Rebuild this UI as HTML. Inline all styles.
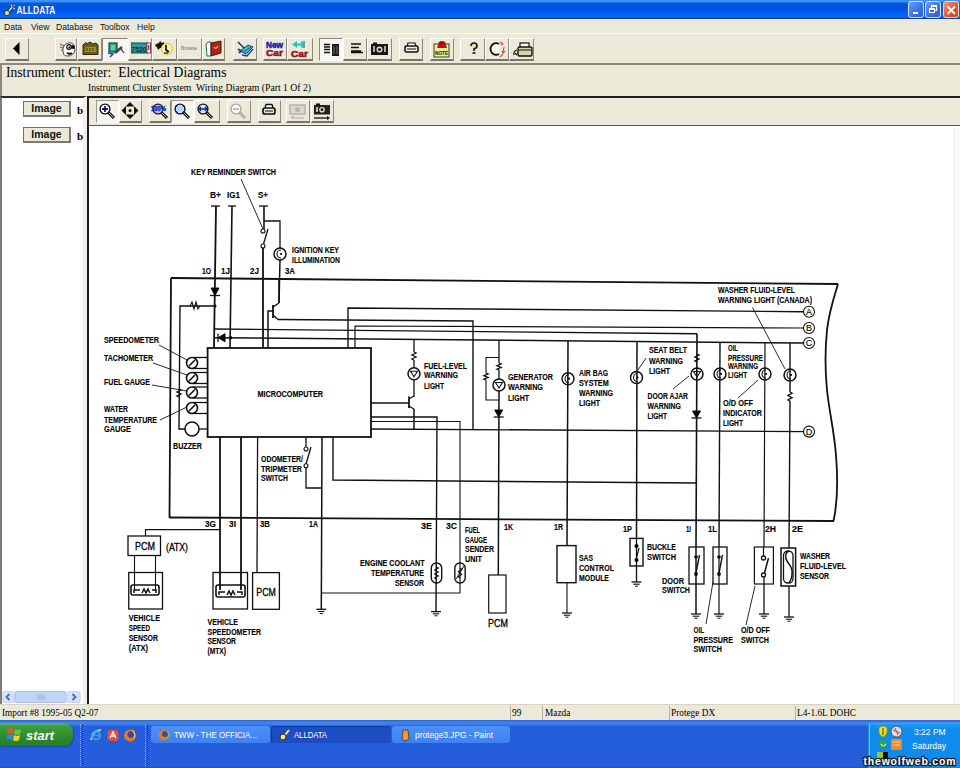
<!DOCTYPE html>
<html><head><meta charset="utf-8">
<style>
*{margin:0;padding:0;box-sizing:border-box}
html,body{width:960px;height:768px;overflow:hidden;background:#ECE9D8;font-family:"Liberation Sans",sans-serif}
.a{position:absolute}
#title{left:0;top:0;width:960px;height:19px;background:linear-gradient(#3a96ff 0px,#3890fa 1.5px,#0a5ed8 3px,#0052d9 5px,#0054e6 9px,#005df2 13px,#0868fb 16px,#0762f2 17.3px,#0c45b0 18px,#0d3a98 19px)}
.wb{top:1px;width:16px;height:17px;border:1px solid #d8e6fc;border-radius:3px;background:linear-gradient(135deg,#6d9bf7,#3b6fe6 60%,#2a5fdc)}
#menu{left:0;top:19px;width:960px;height:14px;border-top:1px solid #dff3fb;background:linear-gradient(#e3e6dc 0px,#ECE9D8 2px);font-size:8.6px;color:#111}
#menu span{position:absolute;top:3px;line-height:9px}
#tb{left:0;top:33px;width:960px;height:31px;border-top:1px solid #fbfaf4}
.btn{position:absolute;top:4px;height:24px;border-left:1px solid #fff;border-top:1px solid #fff;border-right:1px solid #8f8b7b;border-bottom:2px solid #77746a}
.btn svg{position:absolute;left:2px;top:1px}
.prs{background:#f7f6f0;border-left:1px solid #8a877a;border-top:1px solid #8a877a;border-right:1px solid #fff;border-bottom:1px solid #fff}
.ib.prs{border-left:1px solid #9d9a8c;border-top:1px solid #9d9a8c;border-right:1px solid #fff;border-bottom:1px solid #fff;background:#f4f3ee}
#hdr{left:0;top:63px;width:960px;height:33px;border-top:2px solid #8c897c;border-left:2px solid #8c897c}
#hdr .h1{left:4px;top:0px;font-family:"Liberation Serif",serif;font-size:13.6px;color:#000;white-space:nowrap}
#hdr .h2{left:86px;top:17px;font-family:"Liberation Serif",serif;font-size:9.7px;color:#000;white-space:nowrap}
#left{left:0;top:96px;width:87px;height:608px;background:#fff;border-top:2px solid #2b2b2b;border-left:2px solid #7b7b7b;border-right:4px solid #f0efea}
#right{left:87px;top:96px;width:873px;height:608px;background:#fff;border-top:2px solid #1e1e1e;border-left:2px solid #1e1e1e}
#itb{left:0;top:0;width:872px;height:28px;background:#ECE9D8;border-bottom:1px solid #5a5a55}
.ib{position:absolute;top:3px;height:23px;border-left:1px solid #fff;border-top:1px solid #fff;border-right:1px solid #8f8b7b;border-bottom:2px solid #77746a}
.ib svg{position:absolute;left:1px;top:0px}
.imgbtn{position:absolute;left:21px;width:48px;height:16px;background:#ECE9D8;border:1px solid #6f6f6f;border-right:2px solid #7a7a7a;border-bottom:2px solid #7a7a7a;font-weight:bold;font-size:10.5px;text-align:center;line-height:13px;color:#111}
.bb{position:absolute;left:75px;font-family:"Liberation Serif",serif;font-weight:bold;font-size:11px}
#status{left:0;top:704px;width:960px;height:16px;background:#ECE9D8;border-top:1px solid #d8d4c4;font-family:"Liberation Serif",serif;font-size:9.3px;color:#000}
#status span{position:absolute;top:3px;line-height:10px}
#status i{position:absolute;top:1px;width:1px;height:14px;background:#b5b2a4}
#task{left:0;top:720px;width:960px;height:48px;background:linear-gradient(#2b62cc 0px,#3a78e2 1.5px,#3e84f3 3px,#3a7ceb 4.5px,#2763dd 6px,#245edb 8px,#245edb 46px,#1f52c4 48px)}
#start{left:0;top:3px;width:73px;height:23px;border-radius:0 9px 9px 0;background:linear-gradient(#5cb85c 0%,#3b9b3b 18%,#2f8b2f 60%,#287c28 100%);box-shadow:1px 1px 1px #1a4aa0}
.tbtn{position:absolute;top:6px;height:17px;border-radius:3px;overflow:hidden}
#tray{left:868px;top:3px;width:92px;height:45px;background:linear-gradient(#1e9af5,#0f8ced 10%,#0e8aec 100%);border-left:1px solid #2a8ae8;border-top:1px solid #3aa8f8;box-shadow:inset 1px 0 0 #5ec0ff}
</style></head><body>
<div id="title" class="a">
<svg class="a" style="left:2px;top:3px" width="14" height="14" viewBox="0 0 14 14"><path d="M4,12 L10,4" stroke="#222" stroke-width="3"/><path d="M4,12 L10,4" stroke="#e8f4d0" stroke-width="1.5"/><circle cx="5" cy="10" r="2.6" fill="#c8e8a0" stroke="#2b2b10" stroke-width="0.9"/><path d="M9,1.5 L10,3.5 M11.5,3 L13,2 M11,5 L13,6" stroke="#fff" stroke-width="0.9"/></svg>
<svg class="a" style="left:16px;top:4px" width="42" height="12"><text x="1" y="10" font-family="Liberation Sans" font-weight="bold" font-size="10.2" fill="#0a1850" fill-opacity="0.85" textLength="39" lengthAdjust="spacingAndGlyphs">ALLDATA</text><text x="0.5" y="9.5" font-family="Liberation Sans" font-weight="bold" font-size="10.2" fill="#fff" textLength="39" lengthAdjust="spacingAndGlyphs">ALLDATA</text></svg>
<div class="wb a" style="left:908px"><div class="a" style="left:4px;top:10px;width:5px;height:2px;background:#fff"></div></div>
<div class="wb a" style="left:925px"><div class="a" style="left:5px;top:3px;width:6px;height:6px;border:1px solid #fff;border-top-width:2px"></div><div class="a" style="left:3px;top:6px;width:6px;height:5px;border:1px solid #fff;border-top-width:2px;background:#3e72e5"></div></div>
<div class="wb a" style="left:943px;background:linear-gradient(135deg,#f09a7a,#e2582f 55%,#c9401a)"><svg class="a" style="left:1px;top:2px" width="12" height="12"><path d="M2.5,2.5 L10,10 M10,2.5 L2.5,10" stroke="#fff" stroke-width="1.8"/></svg></div>
</div>
<div id="menu" class="a"><span style="left:4px">Data</span><span style="left:31px">View</span><span style="left:56px">Database</span><span style="left:100px">Toolbox</span><span style="left:137px">Help</span></div>
<div id="tb" class="a">
<div class="btn" style="left:5px;top:4px;width:24px;height:23px"><svg width="21" height="20" viewBox="0 0 21 20"><path d="M5,8.4 L11.5,2 L11.5,15 Z" fill="#000"/></svg></div>
<div class="btn" style="left:55px;top:4px;width:22px;height:23px"><svg width="19" height="20" viewBox="0 0 19 20"><path d="M2,4 L6,6 M2,7 L5,8 M3,10 L5,10" stroke="#a05050" stroke-width="1.2"/><path d="M5,12 Q4,5 10,3 Q15,2 16,6 Q18,10 16,13 Q13,17 8,16 Q5,15 5,12 Z" fill="#fff" stroke="#333" stroke-width="0.9"/><circle cx="11" cy="7" r="2.3" fill="#fff" stroke="#111" stroke-width="1.2"/><circle cx="15" cy="7" r="2" fill="#111"/><circle cx="11.3" cy="7.3" r="1" fill="#111"/><path d="M9,12.5 Q11,15 14,13" stroke="#111" stroke-width="2" fill="none"/></svg></div>
<div class="btn" style="left:77px;top:4px;width:25px;height:23px"><svg width="22" height="20" viewBox="0 0 22 20"><path d="M3,5 L6,2.5 L7,4 L10,2 L13,4 L16,3 L18,5 L18,14.5 L3,14.5 Z" fill="#6a5c14" stroke="#2e2806" stroke-width="1"/><rect x="5" y="7" width="11" height="5" fill="#9c8e2a"/><path d="M7,8 V11 M10,8 V11 M13,8 V11" stroke="#3e360a" stroke-width="1"/></svg></div>
<div class="btn prs" style="left:102px;top:4px;width:26px;height:23px"><svg width="23" height="20" viewBox="0 0 23 20"><rect x="4" y="3" width="8" height="9" fill="#2aa878" stroke="#0e4a3a" stroke-width="1.2"/><rect x="6" y="5" width="4" height="5" fill="#5ad0b0"/><path d="M3,13 L8,14 L5,17" stroke="#2050b8" stroke-width="1.6" fill="none"/><path d="M10,13 L17,7" stroke="#444" stroke-width="2.4"/><path d="M16,9 L19,13" stroke="#333" stroke-width="1.2"/></svg></div>
<div class="btn" style="left:128px;top:4px;width:24px;height:23px"><svg width="21" height="20" viewBox="0 0 21 20"><rect x="0" y="3" width="16" height="10" fill="#2a9a9a" stroke="#1a4050" stroke-width="1"/><text x="0.5" y="11.5" font-size="8" font-weight="bold" fill="#0d2a3a" font-family="Liberation Sans" textLength="15" lengthAdjust="spacingAndGlyphs">7520</text><rect x="16" y="3" width="3.5" height="10" fill="#fff" stroke="#a03040" stroke-width="1"/><rect x="17.3" y="5" width="1" height="5" fill="#111"/></svg></div>
<div class="btn" style="left:152px;top:4px;width:25px;height:23px"><svg width="22" height="20" viewBox="0 0 22 20"><path d="M1,4 L4,3 L5,1 L7,3 L9,2 L9,5 L7,6 L8,8 L5,8 L3,10 L2,7 L0,6 Z" fill="#111"/><circle cx="12" cy="9" r="5.5" fill="#f8f4c0" stroke="#d8d040" stroke-width="1.3"/><path d="M11,5 L11,10 L14,12" stroke="#000" stroke-width="1.6" fill="none"/><path d="M9,13 H13" stroke="#111" stroke-width="1.2"/></svg></div>
<div class="btn" style="left:177px;top:4px;width:24.5px;height:23px"><svg width="21.5" height="20" viewBox="0 0 21.5 20"><text x="1" y="10" font-size="5.5" font-weight="bold" fill="#8a8a80" font-family="Liberation Sans" textLength="16" lengthAdjust="spacingAndGlyphs">Browse</text></svg></div>
<div class="btn" style="left:202px;top:4px;width:23px;height:23px"><svg width="20" height="20" viewBox="0 0 20 20"><path d="M1,4 L3,2 L6,2 L6,16 L2,16 Z" fill="#fff" stroke="#2a6a40" stroke-width="1"/><path d="M6,3 L16,1 L16,13 L6,16 Z" fill="#a82810" stroke="#401008" stroke-width="0.9"/><path d="M9,7 Q11,10 13,6" stroke="#f8a0a0" stroke-width="1.3" fill="none"/></svg></div>
<div class="btn" style="left:232.7px;top:4px;width:24.30000000000001px;height:23px"><svg width="21.30000000000001" height="20" viewBox="0 0 21.30000000000001 20"><path d="M2,2 L8,8" stroke="#222" stroke-width="1.3"/><path d="M4,11 L10,14 L17,7 L12,5 Z" fill="#30c0b0" stroke="#1a3a9a" stroke-width="1"/><path d="M2,9 L5,11 L3,13" stroke="#1a3aa0" stroke-width="2" fill="none"/><path d="M8,12 L15,7" stroke="#1a3a9a" stroke-width="0.8"/><path d="M6,15 L11,16 L17,9" stroke="#1a3a9a" stroke-width="1.4" fill="none"/></svg></div>
<div class="btn" style="left:263px;top:4px;width:24px;height:23px"><svg width="21" height="20" viewBox="0 0 21 20"><text x="0" y="7.5" font-size="8.5" font-weight="bold" fill="#1820b0" stroke="#1820b0" stroke-width="0.5" font-family="Liberation Sans" textLength="17" lengthAdjust="spacingAndGlyphs">New</text><text x="0" y="16" font-size="9" font-weight="bold" fill="#901018" stroke="#901018" stroke-width="0.5" font-family="Liberation Sans" textLength="17" lengthAdjust="spacingAndGlyphs">Car</text></svg></div>
<div class="btn" style="left:287px;top:4px;width:26px;height:23px"><svg width="23" height="20" viewBox="0 0 23 20"><path d="M2,4.5 L7,1 L7,3.5 L11,3.5 L11,1.5 L13,1.5 L13,7.5 L11,7.5 L11,5.5 L7,5.5 L7,8 Z" fill="#20c8c0"/><path d="M14,1 V8" stroke="#1a6a6a" stroke-width="1.2"/><text x="1" y="16.5" font-size="9" font-weight="bold" fill="#901018" stroke="#901018" stroke-width="0.5" font-family="Liberation Sans" textLength="17" lengthAdjust="spacingAndGlyphs">Car</text></svg></div>
<div class="btn prs" style="left:319px;top:4px;width:24px;height:23px"><svg width="21" height="20" viewBox="0 0 21 20"><path d="M2,4.5 H8 M2,7 H8 M2,9.5 H8 M2,12.5 H8" stroke="#111" stroke-width="1.4"/><rect x="10" y="4" width="7" height="12" fill="#1a1a1a"/><path d="M12,6 V14 M15,6 V14" stroke="#888" stroke-width="0.8"/></svg></div>
<div class="btn" style="left:343px;top:4px;width:24px;height:23px"><svg width="21" height="20" viewBox="0 0 21 20"><path d="M5,4 H15 M5,7.5 H13 M5,11 H15 M5,12.5 H17" stroke="#111" stroke-width="1.4"/></svg></div>
<div class="btn" style="left:367px;top:4px;width:25px;height:23px"><svg width="22" height="20" viewBox="0 0 22 20"><rect x="1" y="4" width="17" height="11" fill="#161616"/><rect x="3" y="2.5" width="4" height="2" fill="#111"/><circle cx="9.5" cy="9.5" r="3" fill="#ddd"/><circle cx="9.5" cy="9.5" r="1.6" fill="#111"/><rect x="3" y="6" width="2" height="6" fill="#aaa"/><rect x="14" y="6" width="2" height="6" fill="#aaa"/></svg></div>
<div class="btn" style="left:399px;top:4px;width:24px;height:23px"><svg width="21" height="20" viewBox="0 0 21 20"><path d="M5,6 L6,3 L13,3 L14,6" fill="#fff" stroke="#111" stroke-width="1.2"/><rect x="3" y="6" width="13" height="6" rx="1.5" fill="#eee" stroke="#111" stroke-width="1.6"/><path d="M5,9 H14" stroke="#111" stroke-width="1"/></svg></div>
<div class="btn" style="left:430px;top:4px;width:24px;height:23px"><svg width="21" height="20" viewBox="0 0 21 20"><rect x="1" y="4" width="15" height="13" fill="#f0ec9a" stroke="#2a4a20" stroke-width="1"/><text x="2" y="15" font-size="5.5" font-weight="bold" fill="#111" font-family="Liberation Sans" textLength="13" lengthAdjust="spacingAndGlyphs">NOTE</text><path d="M5,5 Q5,1 9,1 Q13,1 13,5 L14,8 L4,8 Z" fill="#c01018"/><path d="M7,3 H11" stroke="#600" stroke-width="1"/></svg></div>
<div class="btn" style="left:460px;top:4px;width:25px;height:23px"><svg width="22" height="20" viewBox="0 0 22 20"><path d="M8,6 Q8,3 11,3 Q14,3 14,6 Q14,8 11,9 L11,11" stroke="#111" stroke-width="1.6" fill="#f0e880"/><path d="M9.5,13 H12.5" stroke="#111" stroke-width="1.6"/></svg></div>
<div class="btn" style="left:485px;top:4px;width:24px;height:23px"><svg width="21" height="20" viewBox="0 0 21 20"><path d="M11,4 Q7,2 4,5 Q1,9 4,13 Q7,16 11,14" stroke="#111" stroke-width="1.8" fill="#fafafa"/><path d="M12,2 L15,4 L13,5 M16,7 L15,12 M14,11 L15,13 L17,11 M15,14 L12,17" stroke="#d04848" stroke-width="1.1" fill="none"/></svg></div>
<div class="btn" style="left:509px;top:4px;width:25px;height:23px"><svg width="22" height="20" viewBox="0 0 22 20"><rect x="8" y="3" width="9" height="5" fill="#fff" stroke="#111" stroke-width="1.2"/><rect x="6" y="7" width="14" height="9" rx="1.5" fill="#d8d4b0" stroke="#111" stroke-width="1.4"/><path d="M7,10 H19" stroke="#111"/><path d="M2,15 Q1,11 5,10 M3,13 L5,15" stroke="#111" stroke-width="1.1" fill="none"/></svg></div>
</div>
<div id="hdr" class="a"><div class="h1 a">Instrument Cluster:&nbsp; Electrical Diagrams</div><div class="h2 a">Instrument Cluster System&nbsp; Wiring Diagram (Part 1 Of 2)</div></div>
<div id="left" class="a">
<div class="imgbtn" style="top:3px">Image</div><div class="bb" style="top:6px">b</div>
<div class="imgbtn" style="top:29px">Image</div><div class="bb" style="top:32px">b</div>
<div class="a" style="left:0px;top:593px;width:79px;height:12px;border-radius:2px;background:linear-gradient(#eef2fd,#dfe8fb)"></div>
<svg class="a" style="left:0px;top:593px" width="80" height="12"><rect x="1" y="0.5" width="11" height="11" rx="2" fill="#d6e1fb" stroke="#c3d3f6"/><path d="M7.5,3 L4.5,6 L7.5,9" stroke="#4868b8" stroke-width="1.8" fill="none"/><rect x="13" y="0.5" width="51" height="11" rx="2" fill="#c2d3f9" stroke="#aabff2"/><path d="M36,3.5 V8.5 M38,3.5 V8.5 M40,3.5 V8.5 M42,3.5 V8.5" stroke="#8aa4e0" stroke-width="0.8"/><rect x="66" y="0.5" width="12" height="11" rx="2" fill="#d6e1fb" stroke="#c3d3f6"/><path d="M70.5,3 L73.5,6 L70.5,9" stroke="#4868b8" stroke-width="1.8" fill="none"/></svg>
</div>
<div id="right" class="a"><div id="itb" class="a">
<div class="ib prs" style="left:6.5px;top:2px;width:23.0px;height:23px"><svg width="20.0" height="20" viewBox="0 0 20.0 20"><path d="M10.5,11.5 L16,17" stroke="#111" stroke-width="3"/><path d="M11,12 L15.5,16.5" stroke="#ddd" stroke-width="0.8"/><circle cx="7" cy="8" r="4.9" fill="#fff" stroke="#111" stroke-width="1.4"/><path d="M4,8 H10 M7,5 V11" stroke="#1a1a70" stroke-width="1.8"/></svg></div>
<div class="ib" style="left:29.5px;top:2px;width:23.0px;height:23px"><svg width="20.0" height="20" viewBox="0 0 20.0 20"><path d="M9,1 L13.5,5.5 L4.5,5.5 Z M9,18 L13.5,13.5 L4.5,13.5 Z M0.5,9.5 L5,5 L5,14 Z M17.5,9.5 L13,5 L13,14 Z" fill="#111"/><circle cx="9" cy="9.5" r="1.5" fill="#111"/></svg></div>
<div class="ib" style="left:60px;top:2px;width:22px;height:23px"><svg width="19" height="20" viewBox="0 0 19 20"><path d="M10.5,11.5 L16,17" stroke="#111" stroke-width="3"/><path d="M11,12 L15.5,16.5" stroke="#ddd" stroke-width="0.8"/><circle cx="7" cy="8" r="4.9" fill="#fff" stroke="#111" stroke-width="1.4"/><circle cx="7" cy="8" r="4" fill="#9fc8f0"/><text x="0" y="9.5" font-size="6.5" font-weight="bold" fill="#1030b0" stroke="#1030b0" stroke-width="0.4" font-family="Liberation Sans" textLength="15" lengthAdjust="spacingAndGlyphs">100%</text></svg></div>
<div class="ib prs" style="left:82px;top:2px;width:23px;height:23px"><svg width="20" height="20" viewBox="0 0 20 20"><path d="M10.5,11.5 L16,17" stroke="#111" stroke-width="3"/><path d="M11,12 L15.5,16.5" stroke="#ddd" stroke-width="0.8"/><circle cx="7" cy="8" r="4.9" fill="#fff" stroke="#111" stroke-width="1.4"/><circle cx="7" cy="8" r="3.8" fill="#a8daf4"/><path d="M3.5,6 V4.5 H5 M9,4.5 H10.5 V6 M10.5,10 V11.5 H9 M5,11.5 H3.5 V10" stroke="#102a90" stroke-width="1.2" fill="none"/></svg></div>
<div class="ib" style="left:105px;top:2px;width:26px;height:23px"><svg width="23" height="20" viewBox="0 0 23 20"><path d="M10.5,11.5 L16,17" stroke="#111" stroke-width="3"/><path d="M11,12 L15.5,16.5" stroke="#ddd" stroke-width="0.8"/><circle cx="7" cy="8" r="4.9" fill="#fff" stroke="#111" stroke-width="1.4"/><circle cx="7" cy="8" r="3.8" fill="#c8e4f8"/><path d="M3,8 H11 M3,8 L5,6 M3,8 L5,10 M11,8 L9,6 M11,8 L9,10" stroke="#102a90" stroke-width="1.3" fill="none"/></svg></div>
<div class="ib" style="left:138px;top:2px;width:24px;height:23px"><svg width="21" height="20" viewBox="0 0 21 20"><path d="M10.5,11.5 L16,17" stroke="#a8a8a0" stroke-width="3"/><path d="M11,12 L15.5,16.5" stroke="#ddd" stroke-width="0.8"/><circle cx="7" cy="8" r="4.9" fill="#fff" stroke="#a8a8a0" stroke-width="1.4"/><path d="M4,8 H10" stroke="#a8a8a0" stroke-width="1.5"/></svg></div>
<div class="ib" style="left:169px;top:2px;width:23px;height:23px"><svg width="20" height="20" viewBox="0 0 20 20"><path d="M5,7 L6,3.5 L12,3.5 L13,7" fill="#fff" stroke="#111" stroke-width="1.3"/><rect x="3" y="7" width="12" height="6" rx="2" fill="#e8e8e0" stroke="#111" stroke-width="1.7"/><path d="M5,10 H13" stroke="#111" stroke-width="1"/></svg></div>
<div class="ib" style="left:197px;top:2px;width:23.5px;height:23px"><svg width="20.5" height="20" viewBox="0 0 20.5 20"><rect x="2" y="4" width="15" height="9" fill="#d8d8d0" stroke="#b0b0a8" stroke-width="1.4"/><circle cx="9.5" cy="8.5" r="2.6" fill="#b8b8b0"/><path d="M3,17 H16 M3,17 L6,15" stroke="#b0b0a8" stroke-width="1.2"/></svg></div>
<div class="ib" style="left:222px;top:2px;width:23px;height:23px"><svg width="20" height="20" viewBox="0 0 20 20"><rect x="1" y="4" width="16" height="9.5" fill="#222"/><rect x="3" y="2.5" width="4" height="2" fill="#111"/><circle cx="9" cy="8.7" r="2.8" fill="#ddd"/><circle cx="9" cy="8.7" r="1.4" fill="#111"/><rect x="3" y="6" width="2" height="5" fill="#bbb"/><path d="M1,17 H15" stroke="#111" stroke-width="1.3"/><path d="M14,15 L17,17 L14,19 Z" fill="#111"/></svg></div>
</div>
<div class="a" style="left:865px;top:29px;width:1px;height:581px;background:#ececec"></div><div class="a" style="left:866px;top:29px;width:7px;height:581px;background:#fafaf8"></div>
</div>
<svg class="a" style="left:0;top:0" width="960" height="768" viewBox="0 0 960 768" stroke="#111" fill="none"><g font-family="Liberation Sans, sans-serif" font-weight="bold" fill="#111" stroke="none" id="txt"></g><g stroke-linecap="butt"><line x1="241" y1="179" x2="263" y2="229" stroke-width="0.9"/>
<line x1="211" y1="206" x2="220" y2="206" stroke-width="1.3"/>
<line x1="228" y1="206" x2="236" y2="206" stroke-width="1.3"/>
<line x1="259" y1="206" x2="268" y2="206" stroke-width="1.3"/>
<line x1="216" y1="206" x2="214" y2="348" stroke-width="1.8"/>
<line x1="232" y1="206" x2="230" y2="348" stroke-width="1.6"/>
<line x1="264" y1="206" x2="264" y2="229" stroke-width="1.6"/>
<polyline points="264,221 280,221 280,248" stroke-width="1.3" fill="none"/>
<circle cx="280" cy="254" r="6" stroke-width="1.5" fill="none"/>
<path d="M281,250 A4,4 0 0 0 281,258" stroke-width="1.1" fill="none"/>
<circle cx="281" cy="254" r="1.1" fill="#000" stroke="none"/>
<line x1="280" y1="260" x2="279" y2="303" stroke-width="1.5"/>
<circle cx="263" cy="231" r="2" stroke-width="1.1" fill="none"/>
<circle cx="263" cy="246" r="2" stroke-width="1.1" fill="none"/>
<line x1="263.5" y1="244" x2="268" y2="229" stroke-width="1.3"/>
<line x1="263" y1="248" x2="263" y2="348" stroke-width="1.8"/>
<line x1="171" y1="278" x2="838" y2="284" stroke-width="1.8"/>
<line x1="171" y1="278" x2="169.5" y2="518" stroke-width="1.8"/>
<line x1="169.5" y1="517.5" x2="834" y2="521" stroke-width="1.8"/>
<path d="M838,284 C833,300 829,312 827,330 C825,350 825,370 827,390 C829,410 834,430 836,455 C838,480 837,505 833.5,521" stroke-width="1.8" fill="none"/>
<path d="M211,288 L219,288 L215,295.5 Z" stroke-width="1" fill="#000"/>
<line x1="210" y1="295.5" x2="220" y2="295.5" stroke-width="1.3"/>
<circle cx="215" cy="306" r="1.5" fill="#000" stroke="none"/>
<polyline points="215,306 180,306 179,429 185,429" stroke-width="1.4" fill="none"/>
<polyline points="190,306 192,302 194,309 196,302 198,309 200,306" stroke-width="1.1" fill="none"/>
<polyline points="179,389 181.2,390.0 176.8,392.0 181.2,394.0 176.8,396.0 179,397" stroke-width="1.2" fill="none"/>
<line x1="214" y1="329" x2="697" y2="333.7" stroke-width="1.4"/>
<line x1="697" y1="333.7" x2="696" y2="547" stroke-width="1.6"/>
<line x1="214" y1="337.7" x2="803.5" y2="343" stroke-width="1.5"/>
<path d="M218,337.7 L225,333.7 L225,341.7 Z" stroke-width="1" fill="#000"/>
<line x1="218" y1="333.5" x2="218" y2="342" stroke-width="1.3"/>
<circle cx="230.5" cy="337.7" r="1.8" fill="#000" stroke="none"/>
<polyline points="348,348 348,308 803.5,311.7" stroke-width="1.4" fill="none"/>
<polyline points="355,348 355,326 803.5,328" stroke-width="1.2" fill="none"/>
<circle cx="809" cy="311.7" r="5.5" stroke-width="1.1" fill="none"/>
<circle cx="809" cy="328" r="5.5" stroke-width="1.1" fill="none"/>
<circle cx="809" cy="343" r="5.5" stroke-width="1.1" fill="none"/>
<circle cx="809" cy="431.6" r="5.5" stroke-width="1.1" fill="none"/>
<line x1="279" y1="279" x2="279" y2="303" stroke-width="1.5"/>
<line x1="279" y1="303" x2="273" y2="307" stroke-width="1.3"/>
<line x1="273" y1="305" x2="273" y2="318" stroke-width="1.8"/>
<line x1="273" y1="315" x2="278" y2="319.5" stroke-width="1.3"/>
<polyline points="278,319.5 473,321 473,429" stroke-width="1.4" fill="none"/>
<polyline points="273,311 268,311 268,348" stroke-width="1.5" fill="none"/>
<line x1="371" y1="429" x2="803.5" y2="431.6" stroke-width="1.4"/>
<rect x="207.6" y="348" width="163.4" height="89" rx="0" stroke-width="1.8" fill="none"/>
<circle cx="192" cy="363" r="5.5" stroke-width="1.6" fill="none"/>
<line x1="189" y1="366" x2="195" y2="360" stroke-width="1.6"/>
<line x1="193" y1="357.5" x2="207" y2="357.5" stroke-width="1.3"/>
<line x1="193" y1="368.5" x2="207" y2="368.5" stroke-width="1.3"/>
<circle cx="192" cy="378" r="5.5" stroke-width="1.6" fill="none"/>
<line x1="189" y1="381" x2="195" y2="375" stroke-width="1.6"/>
<line x1="193" y1="372.5" x2="207" y2="372.5" stroke-width="1.3"/>
<line x1="193" y1="383.5" x2="207" y2="383.5" stroke-width="1.3"/>
<circle cx="192" cy="392.5" r="5.5" stroke-width="1.6" fill="none"/>
<line x1="189" y1="395.5" x2="195" y2="389.5" stroke-width="1.6"/>
<line x1="193" y1="387.0" x2="207" y2="387.0" stroke-width="1.3"/>
<line x1="193" y1="398.0" x2="207" y2="398.0" stroke-width="1.3"/>
<circle cx="192" cy="408" r="5.5" stroke-width="1.6" fill="none"/>
<line x1="189" y1="411" x2="195" y2="405" stroke-width="1.6"/>
<line x1="193" y1="402.5" x2="207" y2="402.5" stroke-width="1.3"/>
<line x1="193" y1="413.5" x2="207" y2="413.5" stroke-width="1.3"/>
<circle cx="192" cy="429" r="7" stroke-width="1.5" fill="none"/>
<line x1="199" y1="429" x2="207.6" y2="429" stroke-width="1.3"/>
<line x1="159" y1="345" x2="187" y2="360" stroke-width="0.9"/>
<line x1="153" y1="363" x2="187" y2="375" stroke-width="0.9"/>
<line x1="152" y1="385" x2="187" y2="391" stroke-width="0.9"/>
<line x1="160" y1="420" x2="187" y2="407" stroke-width="0.9"/>
<line x1="220" y1="437" x2="220" y2="590" stroke-width="1.8"/>
<line x1="241" y1="437" x2="241" y2="590" stroke-width="1.8"/>
<line x1="257.6" y1="437" x2="257" y2="572.6" stroke-width="1.3"/>
<line x1="306" y1="437" x2="306" y2="447" stroke-width="1.3"/>
<circle cx="306" cy="449" r="2" stroke-width="1.1" fill="none"/>
<circle cx="306" cy="465.7" r="2" stroke-width="1.1" fill="none"/>
<line x1="306" y1="464" x2="311" y2="447" stroke-width="1.3"/>
<polyline points="306,468 306,488 322,488" stroke-width="1.3" fill="none"/>
<line x1="322" y1="437" x2="321.3" y2="609.3" stroke-width="1.5"/>
<line x1="316.3" y1="609.3" x2="326.3" y2="609.3" stroke-width="1.3"/>
<line x1="318.1" y1="611.5" x2="324.5" y2="611.5" stroke-width="1.1"/>
<line x1="319.8" y1="613.5" x2="322.8" y2="613.5" stroke-width="1"/>
<polyline points="333,437 333,480 696,483" stroke-width="1.4" fill="none"/>
<line x1="371" y1="403" x2="409" y2="403" stroke-width="1.3"/>
<polyline points="371,417 437,417 436,611.6" stroke-width="1.4" fill="none"/>
<polyline points="371,421.5 460,421.5 460,593 322,593" stroke-width="1.1" fill="none"/>
<line x1="414" y1="340" x2="414" y2="352" stroke-width="1.3"/>
<polyline points="414,352 416.2,353.0 411.8,355.0 416.2,357.0 411.8,359.0 414,360" stroke-width="1.2" fill="none"/>
<line x1="414" y1="360" x2="414" y2="367.7" stroke-width="1.3"/>
<circle cx="414" cy="373.7" r="6" stroke-width="1.5" fill="none"/>
<path d="M410.5,371.2 L417.5,371.2 L414,376.7 Z" stroke-width="1.1" fill="none"/>
<line x1="414" y1="379.7" x2="414" y2="397" stroke-width="1.3"/>
<line x1="409" y1="396.5" x2="409" y2="408" stroke-width="1.8"/>
<line x1="409" y1="399" x2="414" y2="396" stroke-width="1.3"/>
<line x1="409" y1="406" x2="414" y2="409" stroke-width="1.3"/>
<line x1="414" y1="409" x2="414" y2="429" stroke-width="1.5"/>
<line x1="499" y1="340" x2="499" y2="363" stroke-width="1.3"/>
<polyline points="499,363 501.2,363.875 496.8,365.625 501.2,367.375 496.8,369.125 499,370" stroke-width="1.2" fill="none"/>
<line x1="499" y1="370" x2="499" y2="379" stroke-width="1.3"/>
<circle cx="499" cy="385" r="6" stroke-width="1.5" fill="none"/>
<path d="M495.5,382.5 L502.5,382.5 L499,388 Z" stroke-width="1.1" fill="none"/>
<line x1="499" y1="391" x2="498.3" y2="575" stroke-width="1.5"/>
<path d="M494.7,410 L502.7,410 L498.7,417 Z" stroke-width="1" fill="#000"/>
<line x1="493.7" y1="417" x2="503.7" y2="417" stroke-width="1.3"/>
<polyline points="499,357.5 486,357.5 486,373" stroke-width="1.1" fill="none"/>
<polyline points="486,373 488.2,373.875 483.8,375.625 488.2,377.375 483.8,379.125 486,380" stroke-width="1.2" fill="none"/>
<polyline points="486,380 486,400 499,400" stroke-width="1.1" fill="none"/>
<line x1="568" y1="341" x2="567" y2="545.6" stroke-width="1.5"/>
<circle cx="568" cy="378.7" r="6" stroke-width="1.5" fill="none"/>
<path d="M569,374.7 A4,4 0 0 0 569,382.7" stroke-width="1.1" fill="none"/>
<circle cx="569" cy="378.7" r="1.1" fill="#000" stroke="none"/>
<line x1="637" y1="342" x2="636.5" y2="538.4" stroke-width="1.5"/>
<circle cx="636.5" cy="377.5" r="6" stroke-width="1.5" fill="none"/>
<path d="M637.5,373.5 A4,4 0 0 0 637.5,381.5" stroke-width="1.1" fill="none"/>
<circle cx="637.5" cy="377.5" r="1.1" fill="#000" stroke="none"/>
<line x1="638" y1="370" x2="646" y2="358" stroke-width="0.9"/>
<polyline points="697,354 699.2,355.0 694.8,357.0 699.2,359.0 694.8,361.0 697,362" stroke-width="1.2" fill="none"/>
<circle cx="697" cy="374" r="6" stroke-width="1.5" fill="none"/>
<path d="M693.5,371.5 L700.5,371.5 L697,377 Z" stroke-width="1.1" fill="none"/>
<path d="M692.5,411 L700.5,411 L696.5,418 Z" stroke-width="1" fill="#000"/>
<line x1="691.5" y1="418" x2="701.5" y2="418" stroke-width="1.3"/>
<line x1="673" y1="389" x2="689" y2="376" stroke-width="0.9"/>
<line x1="720" y1="342.5" x2="719" y2="547" stroke-width="1.4"/>
<circle cx="720" cy="374" r="6" stroke-width="1.5" fill="none"/>
<path d="M721,370 A4,4 0 0 0 721,378" stroke-width="1.1" fill="none"/>
<circle cx="721" cy="374" r="1.1" fill="#000" stroke="none"/>
<line x1="765" y1="343" x2="764" y2="547" stroke-width="1.2"/>
<circle cx="765" cy="374" r="6" stroke-width="1.5" fill="none"/>
<path d="M766,370 A4,4 0 0 0 766,378" stroke-width="1.1" fill="none"/>
<circle cx="766" cy="374" r="1.1" fill="#000" stroke="none"/>
<line x1="738" y1="398" x2="758" y2="380" stroke-width="0.9"/>
<line x1="790" y1="343" x2="790" y2="392" stroke-width="1.4"/>
<circle cx="790" cy="375" r="6" stroke-width="1.5" fill="none"/>
<path d="M791,371 A4,4 0 0 0 791,379" stroke-width="1.1" fill="none"/>
<circle cx="791" cy="375" r="1.1" fill="#000" stroke="none"/>
<polyline points="790,392 792.2,393.125 787.8,395.375 792.2,397.625 787.8,399.875 790,401" stroke-width="1.2" fill="none"/>
<line x1="790" y1="401" x2="789" y2="548" stroke-width="1.4"/>
<line x1="752.5" y1="307.5" x2="785" y2="369" stroke-width="0.9"/>
<polyline points="220,529.6 145.5,529.6 145.5,536" stroke-width="1.2" fill="none"/>
<rect x="128" y="536" width="32.5" height="19.5" rx="0" stroke-width="1.3" fill="none"/>
<line x1="134.5" y1="555.5" x2="134.5" y2="590" stroke-width="1.1"/>
<line x1="155.5" y1="555.5" x2="155.5" y2="590" stroke-width="1.1"/>
<rect x="128.75" y="572.5" width="33.75" height="36.5" rx="0" stroke-width="1.3" fill="none"/>
<rect x="131" y="585" width="28" height="10" rx="2" stroke-width="1.6" fill="none"/>
<path d="M134,593 L134,590 L140,590 M142,593 L144,589 L146,593 L148,589 L150,593 M152,590 L156,590 L156,593" stroke-width="1.5" fill="none"/>
<rect x="213" y="572.5" width="34.5" height="36.5" rx="0" stroke-width="1.3" fill="none"/>
<rect x="216" y="585" width="29" height="12" rx="2" stroke-width="1.6" fill="none"/>
<path d="M219,595 L219,592 L225,592 M227,595 L229,591 L231,595 L233,591 L235,595 M237,592 L242,592 L242,595" stroke-width="1.5" fill="none"/>
<rect x="252.6" y="572.6" width="26.799999999999983" height="36.69999999999993" rx="0" stroke-width="1.3" fill="none"/>
<rect x="431.3" y="563" width="10.399999999999977" height="20" rx="5" stroke-width="1.4" fill="none"/>
<rect x="454.8" y="563" width="10.399999999999977" height="20" rx="5" stroke-width="1.4" fill="none"/>
<polyline points="436.5,567 438.3,568.0 434.7,570.0 438.3,572.0 434.7,574.0 438.3,576.0 434.7,578.0 436.5,579" stroke-width="1.2" fill="none"/>
<line x1="456" y1="579" x2="464" y2="566" stroke-width="1.0"/>
<polyline points="460,568 461.6,569.25 458.4,571.75 461.6,574.25 458.4,576.75 460,578" stroke-width="1.2" fill="none"/>
<line x1="431" y1="611.6" x2="441" y2="611.6" stroke-width="1.3"/>
<line x1="432.8" y1="613.8000000000001" x2="439.2" y2="613.8000000000001" stroke-width="1.1"/>
<line x1="434.5" y1="615.8000000000001" x2="437.5" y2="615.8000000000001" stroke-width="1"/>
<rect x="488.7" y="575" width="17.30000000000001" height="38" rx="0" stroke-width="1.2" fill="none"/>
<rect x="557" y="545.6" width="19" height="37.10000000000002" rx="0" stroke-width="1.4" fill="none"/>
<line x1="567" y1="582.7" x2="567" y2="613" stroke-width="1.1"/>
<line x1="562" y1="613" x2="572" y2="613" stroke-width="1.3"/>
<line x1="563.8" y1="615.2" x2="570.2" y2="615.2" stroke-width="1.1"/>
<line x1="565.5" y1="617.2" x2="568.5" y2="617.2" stroke-width="1"/>
<rect x="630" y="538.4" width="13" height="27.600000000000023" rx="0" stroke-width="1.4" fill="none"/>
<line x1="636.5" y1="538" x2="636.5" y2="566" stroke-width="1.3"/>
<circle cx="636.5" cy="546" r="2" fill="#000" stroke="none"/>
<circle cx="636.5" cy="560" r="2" fill="#000" stroke="none"/>
<line x1="636.5" y1="558" x2="639" y2="548" stroke-width="1.2"/>
<line x1="636.5" y1="566" x2="636.5" y2="582" stroke-width="1.3"/>
<line x1="631.5" y1="582" x2="641.5" y2="582" stroke-width="1.3"/>
<line x1="633.3" y1="584.2" x2="639.7" y2="584.2" stroke-width="1.1"/>
<line x1="635.0" y1="586.2" x2="638.0" y2="586.2" stroke-width="1"/>
<rect x="689" y="547" width="15" height="37" rx="0" stroke-width="1.3" fill="none"/>
<circle cx="696" cy="557" r="1.8" fill="#000" stroke="none"/>
<circle cx="696" cy="574" r="1.9" fill="#000" stroke="none"/>
<line x1="696" y1="573" x2="699.5" y2="555" stroke-width="1.4"/>
<line x1="696" y1="547" x2="696" y2="614" stroke-width="1.5"/>
<line x1="691" y1="614" x2="701" y2="614" stroke-width="1.3"/>
<line x1="692.8" y1="616.2" x2="699.2" y2="616.2" stroke-width="1.1"/>
<line x1="694.5" y1="618.2" x2="697.5" y2="618.2" stroke-width="1"/>
<rect x="713" y="547" width="14" height="37" rx="0" stroke-width="1.3" fill="none"/>
<circle cx="719" cy="557" r="1.8" fill="#000" stroke="none"/>
<circle cx="719" cy="574" r="1.9" fill="#000" stroke="none"/>
<line x1="719" y1="573" x2="722.5" y2="555" stroke-width="1.4"/>
<line x1="719" y1="547" x2="719" y2="614" stroke-width="1.2"/>
<line x1="714" y1="614" x2="724" y2="614" stroke-width="1.3"/>
<line x1="715.8" y1="616.2" x2="722.2" y2="616.2" stroke-width="1.1"/>
<line x1="717.5" y1="618.2" x2="720.5" y2="618.2" stroke-width="1"/>
<line x1="713" y1="582" x2="706" y2="624" stroke-width="0.9"/>
<rect x="754.4" y="547" width="19.0" height="37" rx="0" stroke-width="1.2" fill="none"/>
<line x1="763.5" y1="547" x2="763.5" y2="556" stroke-width="1.2"/>
<circle cx="763.5" cy="558" r="2" stroke-width="1.3" fill="none"/>
<circle cx="763.5" cy="575" r="2" stroke-width="1.3" fill="none"/>
<line x1="764.5" y1="573" x2="768.5" y2="558" stroke-width="1.5"/>
<line x1="764" y1="577" x2="764" y2="614" stroke-width="1.3"/>
<line x1="759" y1="614" x2="769" y2="614" stroke-width="1.3"/>
<line x1="760.8" y1="616.2" x2="767.2" y2="616.2" stroke-width="1.1"/>
<line x1="762.5" y1="618.2" x2="765.5" y2="618.2" stroke-width="1"/>
<line x1="755" y1="586" x2="746" y2="625" stroke-width="0.9"/>
<rect x="781" y="548" width="14.600000000000023" height="38" rx="0" stroke-width="1.5" fill="none"/>
<rect x="783.5" y="551" width="9.5" height="32" rx="4.5" stroke-width="1.3" fill="none"/>
<path d="M789,551 C785,552 785,558 787,561 L791,567 C793,571 792,580 789,582" stroke-width="1.4" fill="none"/>
<line x1="789" y1="586" x2="789" y2="617" stroke-width="1.3"/>
<line x1="784" y1="617" x2="794" y2="617" stroke-width="1.3"/>
<line x1="785.8" y1="619.2" x2="792.2" y2="619.2" stroke-width="1.1"/>
<line x1="787.5" y1="621.2" x2="790.5" y2="621.2" stroke-width="1"/></g><g font-family="Liberation Sans, sans-serif" font-weight="bold" fill="#000" stroke="#000" stroke-width="0.12"><text x="191" y="175" textLength="85" lengthAdjust="spacingAndGlyphs" font-size="8.6">KEY REMINDER SWITCH</text>
<text x="210" y="198" textLength="11" lengthAdjust="spacingAndGlyphs" font-size="8.6">B+</text>
<text x="227" y="198" textLength="13" lengthAdjust="spacingAndGlyphs" font-size="8.6">IG1</text>
<text x="258" y="198" textLength="10" lengthAdjust="spacingAndGlyphs" font-size="8.6">S+</text>
<text x="292" y="252.5" textLength="47" lengthAdjust="spacingAndGlyphs" font-size="8.6">IGNITION KEY</text>
<text x="292" y="263" textLength="48" lengthAdjust="spacingAndGlyphs" font-size="8.6">ILLUMINATION</text>
<text x="202" y="274" textLength="9" lengthAdjust="spacingAndGlyphs" font-size="8.6">1O</text>
<text x="221" y="274" textLength="9" lengthAdjust="spacingAndGlyphs" font-size="8.6">1J</text>
<text x="250" y="274" textLength="9" lengthAdjust="spacingAndGlyphs" font-size="8.6">2J</text>
<text x="285" y="274" textLength="10" lengthAdjust="spacingAndGlyphs" font-size="8.6">3A</text>
<text x="809" y="314.9" font-size="9" text-anchor="middle" font-weight="normal">A</text>
<text x="809" y="331.2" font-size="9" text-anchor="middle" font-weight="normal">B</text>
<text x="809" y="346.2" font-size="9" text-anchor="middle" font-weight="normal">C</text>
<text x="809" y="434.8" font-size="9" text-anchor="middle" font-weight="normal">D</text>
<text x="257.5" y="397" textLength="65.5" lengthAdjust="spacingAndGlyphs" font-size="8.6">MICROCOMPUTER</text>
<text x="173" y="449" textLength="29" lengthAdjust="spacingAndGlyphs" font-size="8.6">BUZZER</text>
<text x="104" y="343" textLength="55" lengthAdjust="spacingAndGlyphs" font-size="8.6">SPEEDOMETER</text>
<text x="104" y="361" textLength="49" lengthAdjust="spacingAndGlyphs" font-size="8.6">TACHOMETER</text>
<text x="104" y="385" textLength="46" lengthAdjust="spacingAndGlyphs" font-size="8.6">FUEL GAUGE</text>
<text x="104" y="412" textLength="24" lengthAdjust="spacingAndGlyphs" font-size="8.6">WATER</text>
<text x="104" y="423" textLength="53" lengthAdjust="spacingAndGlyphs" font-size="8.6">TEMPERATURE</text>
<text x="104" y="432" textLength="27" lengthAdjust="spacingAndGlyphs" font-size="8.6">GAUGE</text>
<text x="261" y="461.6" textLength="42" lengthAdjust="spacingAndGlyphs" font-size="8.6">ODOMETER/</text>
<text x="261" y="471.5" textLength="41" lengthAdjust="spacingAndGlyphs" font-size="8.6">TRIPMETER</text>
<text x="261" y="481" textLength="27" lengthAdjust="spacingAndGlyphs" font-size="8.6">SWITCH</text>
<text x="424" y="369" textLength="43" lengthAdjust="spacingAndGlyphs" font-size="8.6">FUEL-LEVEL</text>
<text x="424" y="378" textLength="34" lengthAdjust="spacingAndGlyphs" font-size="8.6">WARNING</text>
<text x="424" y="389" textLength="20" lengthAdjust="spacingAndGlyphs" font-size="8.6">LIGHT</text>
<text x="508" y="380" textLength="45" lengthAdjust="spacingAndGlyphs" font-size="8.6">GENERATOR</text>
<text x="508" y="390" textLength="35" lengthAdjust="spacingAndGlyphs" font-size="8.6">WARNING</text>
<text x="508" y="401" textLength="21" lengthAdjust="spacingAndGlyphs" font-size="8.6">LIGHT</text>
<text x="579" y="376" textLength="29" lengthAdjust="spacingAndGlyphs" font-size="8.6">AIR BAG</text>
<text x="579" y="386" textLength="29.700000000000045" lengthAdjust="spacingAndGlyphs" font-size="8.6">SYSTEM</text>
<text x="579" y="396" textLength="34" lengthAdjust="spacingAndGlyphs" font-size="8.6">WARNING</text>
<text x="579" y="406" textLength="21" lengthAdjust="spacingAndGlyphs" font-size="8.6">LIGHT</text>
<text x="649" y="353" textLength="38" lengthAdjust="spacingAndGlyphs" font-size="8.6">SEAT BELT</text>
<text x="649" y="364" textLength="34" lengthAdjust="spacingAndGlyphs" font-size="8.6">WARNING</text>
<text x="649" y="374" textLength="21" lengthAdjust="spacingAndGlyphs" font-size="8.6">LIGHT</text>
<text x="647.5" y="399" textLength="40.5" lengthAdjust="spacingAndGlyphs" font-size="8.6">DOOR AJAR</text>
<text x="647.5" y="409" textLength="33.5" lengthAdjust="spacingAndGlyphs" font-size="8.6">WARNING</text>
<text x="647.5" y="419" textLength="19.5" lengthAdjust="spacingAndGlyphs" font-size="8.6">LIGHT</text>
<text x="728" y="351" textLength="10" lengthAdjust="spacingAndGlyphs" font-size="8.6">OIL</text>
<text x="728" y="361" textLength="35" lengthAdjust="spacingAndGlyphs" font-size="8.6">PRESSURE</text>
<text x="728" y="369" textLength="30" lengthAdjust="spacingAndGlyphs" font-size="8.6">WARNING</text>
<text x="728" y="378" textLength="19" lengthAdjust="spacingAndGlyphs" font-size="8.6">LIGHT</text>
<text x="723" y="406" textLength="30" lengthAdjust="spacingAndGlyphs" font-size="8.6">O/D OFF</text>
<text x="723" y="416" textLength="39" lengthAdjust="spacingAndGlyphs" font-size="8.6">INDICATOR</text>
<text x="723" y="426" textLength="20" lengthAdjust="spacingAndGlyphs" font-size="8.6">LIGHT</text>
<text x="718" y="293" textLength="77" lengthAdjust="spacingAndGlyphs" font-size="8.6">WASHER FLUID-LEVEL</text>
<text x="718" y="303" textLength="94" lengthAdjust="spacingAndGlyphs" font-size="8.6">WARNING LIGHT (CANADA)</text>
<text x="205" y="527" textLength="11" lengthAdjust="spacingAndGlyphs" font-size="8.6">3G</text>
<text x="229" y="527" textLength="7" lengthAdjust="spacingAndGlyphs" font-size="8.6">3I</text>
<text x="260" y="527" textLength="10" lengthAdjust="spacingAndGlyphs" font-size="8.6">3B</text>
<text x="309" y="527" textLength="9" lengthAdjust="spacingAndGlyphs" font-size="8.6">1A</text>
<text x="421" y="529" textLength="11" lengthAdjust="spacingAndGlyphs" font-size="8.6">3E</text>
<text x="446" y="529" textLength="11" lengthAdjust="spacingAndGlyphs" font-size="8.6">3C</text>
<text x="504" y="530" textLength="9" lengthAdjust="spacingAndGlyphs" font-size="8.6">1K</text>
<text x="554" y="530" textLength="9" lengthAdjust="spacingAndGlyphs" font-size="8.6">1R</text>
<text x="623" y="532" textLength="9" lengthAdjust="spacingAndGlyphs" font-size="8.6">1P</text>
<text x="686" y="532" textLength="5" lengthAdjust="spacingAndGlyphs" font-size="8.6">1I</text>
<text x="708" y="532" textLength="9" lengthAdjust="spacingAndGlyphs" font-size="8.6">1L</text>
<text x="765" y="532" textLength="11" lengthAdjust="spacingAndGlyphs" font-size="8.6">2H</text>
<text x="792" y="532" textLength="11" lengthAdjust="spacingAndGlyphs" font-size="8.6">2E</text>
<text x="135" y="550" textLength="20" lengthAdjust="spacingAndGlyphs" font-size="10" font-weight="normal" stroke-width="0.3">PCM</text>
<text x="166" y="550.5" textLength="22" lengthAdjust="spacingAndGlyphs" font-size="10" font-weight="normal" stroke-width="0.3">(ATX)</text>
<text x="128.75" y="621" textLength="31.25" lengthAdjust="spacingAndGlyphs" font-size="8.6">VEHICLE</text>
<text x="128.75" y="631" textLength="21.25" lengthAdjust="spacingAndGlyphs" font-size="8.6">SPEED</text>
<text x="128.75" y="641" textLength="29.25" lengthAdjust="spacingAndGlyphs" font-size="8.6">SENSOR</text>
<text x="128.75" y="651" textLength="19.25" lengthAdjust="spacingAndGlyphs" font-size="8.6">(ATX)</text>
<text x="207.5" y="625" textLength="30.5" lengthAdjust="spacingAndGlyphs" font-size="8.6">VEHICLE</text>
<text x="207.5" y="635" textLength="53.5" lengthAdjust="spacingAndGlyphs" font-size="8.6">SPEEDOMETER</text>
<text x="207.5" y="644" textLength="28.5" lengthAdjust="spacingAndGlyphs" font-size="8.6">SENSOR</text>
<text x="207.5" y="654" textLength="18.5" lengthAdjust="spacingAndGlyphs" font-size="8.6">(MTX)</text>
<text x="256.3" y="596" textLength="19.5" lengthAdjust="spacingAndGlyphs" font-size="10.5" font-weight="normal" stroke-width="0.3">PCM</text>
<text x="360" y="566" textLength="64.5" lengthAdjust="spacingAndGlyphs" font-size="8.6">ENGINE COOLANT</text>
<text x="371" y="576" textLength="53" lengthAdjust="spacingAndGlyphs" font-size="8.6">TEMPERATURE</text>
<text x="395" y="586" textLength="29" lengthAdjust="spacingAndGlyphs" font-size="8.6">SENSOR</text>
<text x="465" y="533" textLength="15" lengthAdjust="spacingAndGlyphs" font-size="8.6">FUEL</text>
<text x="465" y="543" textLength="22" lengthAdjust="spacingAndGlyphs" font-size="8.6">GAUGE</text>
<text x="465" y="552" textLength="29" lengthAdjust="spacingAndGlyphs" font-size="8.6">SENDER</text>
<text x="465" y="562" textLength="17" lengthAdjust="spacingAndGlyphs" font-size="8.6">UNIT</text>
<text x="488" y="627" textLength="20" lengthAdjust="spacingAndGlyphs" font-size="10" font-weight="normal" stroke-width="0.3">PCM</text>
<text x="579" y="561" textLength="14" lengthAdjust="spacingAndGlyphs" font-size="8.6">SAS</text>
<text x="579" y="571" textLength="35" lengthAdjust="spacingAndGlyphs" font-size="8.6">CONTROL</text>
<text x="579" y="581" textLength="30" lengthAdjust="spacingAndGlyphs" font-size="8.6">MODULE</text>
<text x="647" y="550" textLength="29" lengthAdjust="spacingAndGlyphs" font-size="8.6">BUCKLE</text>
<text x="647" y="560" textLength="29" lengthAdjust="spacingAndGlyphs" font-size="8.6">SWITCH</text>
<text x="662" y="584" textLength="22" lengthAdjust="spacingAndGlyphs" font-size="8.6">DOOR</text>
<text x="662" y="593" textLength="28" lengthAdjust="spacingAndGlyphs" font-size="8.6">SWITCH</text>
<text x="693.5" y="633" textLength="10.5" lengthAdjust="spacingAndGlyphs" font-size="8.6">OIL</text>
<text x="693.5" y="643" textLength="39.5" lengthAdjust="spacingAndGlyphs" font-size="8.6">PRESSURE</text>
<text x="693.5" y="652" textLength="28.5" lengthAdjust="spacingAndGlyphs" font-size="8.6">SWITCH</text>
<text x="741" y="633" textLength="29" lengthAdjust="spacingAndGlyphs" font-size="8.6">O/D OFF</text>
<text x="741" y="643" textLength="28" lengthAdjust="spacingAndGlyphs" font-size="8.6">SWITCH</text>
<text x="800" y="559" textLength="30" lengthAdjust="spacingAndGlyphs" font-size="8.6">WASHER</text>
<text x="800" y="569" textLength="46" lengthAdjust="spacingAndGlyphs" font-size="8.6">FLUID-LEVEL</text>
<text x="800" y="579" textLength="29" lengthAdjust="spacingAndGlyphs" font-size="8.6">SENSOR</text></g></svg>
<div id="status" class="a"><span style="left:2px">Import #8 1995-05 Q2-07</span>
<i style="left:510px"></i><span style="left:512px">99</span><i style="left:542px"></i><span style="left:545px">Mazda</span><i style="left:669px"></i><span style="left:671px">Protege DX</span><i style="left:795px"></i><span style="left:797px">L4-1.6L DOHC</span></div>
<div id="task" class="a">
<div id="start" class="a"><svg class="a" style="left:7px;top:4px" width="16" height="15" viewBox="0 0 16 15"><path d="M1,2 Q4,0 7,2 L6,7 Q3,5 0,7 Z" fill="#f0502a"/><path d="M8,2 Q11,4 14,2 L13,7 Q10,9 7,7 Z" fill="#6ac23a"/><path d="M0,8 Q3,6 6,8 L5,13 Q2,11 -1,13 Z" fill="#2a8af0"/><path d="M7,8 Q10,10 13,8 L12,13 Q9,15 6,13 Z" fill="#f8d030"/></svg><svg class="a" style="left:25px;top:3px" width="44" height="18"><text x="1" y="13.5" font-family="Liberation Sans" font-weight="bold" font-style="italic" font-size="13.5" fill="#fff" fill-opacity="0.97" textLength="28" lengthAdjust="spacingAndGlyphs">start</text></svg></div>
<div class="a" style="left:80px;top:4px;width:3px;height:42px;border-left:1px dotted #8ab0f4;border-right:1px dotted #153c9c"></div>
<div class="a" style="left:145px;top:4px;width:3px;height:42px;border-left:1px dotted #8ab0f4;border-right:1px dotted #153c9c"></div>
<svg class="a" style="left:88px;top:6px" width="54" height="18"><path d="M3,14 Q5,4 13,4" stroke="#8fd8ff" stroke-width="2" fill="none"/><circle cx="8" cy="9.5" r="4" fill="none" stroke="#3aa0e8" stroke-width="2.2"/><path d="M5,9.5 H11" stroke="#3aa0e8" stroke-width="1.5"/><rect x="19.5" y="4" width="11" height="11" rx="3" fill="#e05040"/><path d="M22,12 L25,6 L28,12 M23,10 H27" stroke="#fff" stroke-width="1.3" fill="none"/><circle cx="42" cy="9.5" r="6" fill="#e8781a"/><circle cx="43" cy="8.5" r="3.4" fill="#3a4aa8"/><path d="M44,4 Q48,7 46,12" stroke="#f8c040" stroke-width="1.2" fill="none"/></svg>
<div class="tbtn a" style="left:151px;width:119px;background:linear-gradient(#4d90f8,#3d82f3)"><svg class="a" style="left:7px;top:2px" width="14" height="14"><circle cx="6" cy="7" r="5.5" fill="#e8781a"/><circle cx="7" cy="6" r="3" fill="#3a4aa8"/><path d="M9,3 Q12,6 10,10" stroke="#6c3" stroke-width="1.5" fill="none"/></svg><svg class="a" style="left:23px;top:0" width="90" height="17"><text x="0" y="11.5" font-size="8.4" fill="#fff" font-family="Liberation Sans" textLength="83" lengthAdjust="spacingAndGlyphs">TWW - THE OFFICIA...</text></svg></div>
<div class="tbtn a" style="left:271px;width:120px;background:#1d4cc3;box-shadow:inset 1px 1px 1px #163a9a"><svg class="a" style="left:7px;top:2px" width="14" height="14"><path d="M3,12 L11,2" stroke="#f5e9a8" stroke-width="2"/><circle cx="5" cy="9" r="3" fill="#f1e18a" stroke="#2b2b10"/></svg><svg class="a" style="left:23px;top:0" width="60" height="17"><text x="0" y="11.5" font-size="8.4" fill="#fff" font-family="Liberation Sans" textLength="33" lengthAdjust="spacingAndGlyphs">ALLDATA</text></svg></div>
<div class="tbtn a" style="left:392px;width:118px;background:linear-gradient(#4d90f8,#3d82f3)"><svg class="a" style="left:7px;top:2px" width="14" height="14"><path d="M4,2 L9,2 L10,11 L6,13 L3,11 Z" fill="#e0a040" stroke="#704010"/></svg><svg class="a" style="left:23px;top:0" width="95" height="17"><text x="0" y="11.5" font-size="8.4" fill="#fff" font-family="Liberation Sans" textLength="78" lengthAdjust="spacingAndGlyphs">protege3.JPG - Paint</text></svg></div>
<div id="tray" class="a"><svg class="a" style="left:5px;top:0px" width="36" height="42"><path d="M9,2 L13,3.5 L13,8 Q13,11 9,13 Q5,11 5,8 L5,3.5 Z" fill="#f0e020" stroke="#a89000" stroke-width="0.8"/><path d="M9,4 V11" stroke="#553" stroke-width="1.2"/><circle cx="22.5" cy="7.5" r="5.5" fill="#d8dce8" stroke="#334" stroke-width="0.8"/><path d="M19,6 L26,9 M21,4 L24,11" stroke="#c04040" stroke-width="1"/><path d="M4,18 Q9,14 13,18 L12,23 Q8,25 5,23 Z" fill="#2aa84a"/><path d="M7,20 Q9,24 12,20" stroke="#ddd" stroke-width="1.2" fill="none"/><rect x="17" y="15" width="11" height="11" rx="1" fill="#f08a28"/><path d="M19,18 H26 M19,21 H26" stroke="#fbd08a" stroke-width="1"/><rect x="3" y="28" width="6" height="6" fill="#9cc830"/><rect x="9" y="28" width="5" height="7" fill="#111"/></svg><div class="a" style="left:45px;top:3px;color:#fff;font-size:8.5px;line-height:10px">3:22 PM</div><div class="a" style="left:43px;top:17px;color:#fff;font-size:8.5px;line-height:10px">Saturday</div></div>
<svg class="a" style="left:858px;top:32px" width="102" height="16"><text x="5.5" y="13" font-family="Liberation Sans" font-weight="bold" font-size="10.5" fill="#1a1a1a" stroke="#1a1a1a" stroke-width="2.4" stroke-linejoin="round" textLength="92" lengthAdjust="spacing">thewolfweb.com</text><text x="5.5" y="13" font-family="Liberation Sans" font-weight="bold" font-size="10.5" fill="#fff" textLength="92" lengthAdjust="spacing">thewolfweb.com</text></svg>
</div>
</body></html>
